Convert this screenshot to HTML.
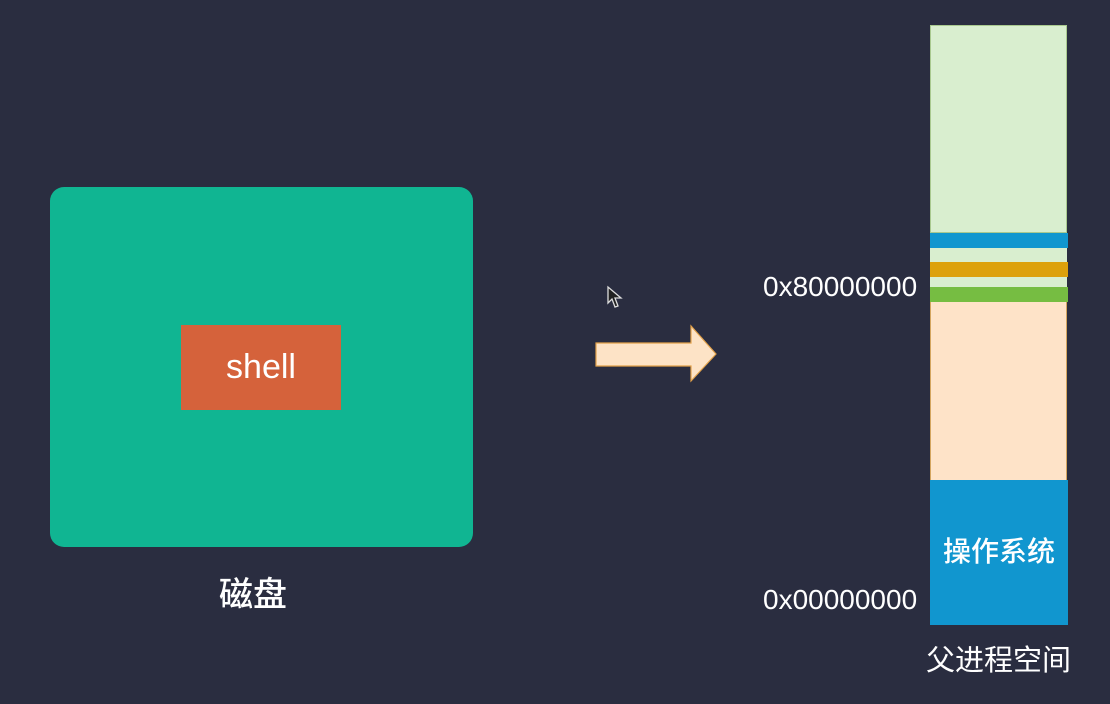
<!DOCTYPE html>
<html><head><meta charset="utf-8"><style>
body{margin:0;width:1110px;height:704px;background:#2a2d40;position:relative;overflow:hidden;font-family:"Liberation Sans","Noto Sans CJK SC",sans-serif;color:#fff}
div{position:absolute;box-sizing:border-box}
.t{white-space:nowrap}
</style></head><body>
<div style="left:50px;top:187px;width:423px;height:360px;background:#10b592;border-radius:14px"></div>
<div style="left:181px;top:325px;width:160px;height:85px;background:#d5623b"></div>
<div class="t" style="left:181px;top:347px;width:160px;text-align:center;font-size:34px;line-height:40px">shell</div>
<div class="t" style="left:219px;top:575px;font-size:34px;line-height:40px;font-weight:500">磁盘</div>
<svg style="position:absolute;left:0;top:0" width="1110" height="704">
<polygon points="596,343 691,343 691,326 716,354 691,381 691,366 596,366" fill="#fde3c6" stroke="#e3a24a" stroke-width="1.2"/>
<path d="M608,287 L608,303 L612,299 L615,307 L618,306 L615,298 L621,298 Z" fill="#222" stroke="#ddd" stroke-width="1.3"/>
</svg>
<div style="left:930px;top:25px;width:137px;height:208px;background:#d9eecf;border:1px solid #a9c98f"></div>
<div style="left:930px;top:233px;width:138px;height:15px;background:#1196cf"></div>
<div style="left:930px;top:248px;width:137px;height:14px;background:#d9eecf"></div>
<div style="left:930px;top:262px;width:138px;height:15px;background:#dda10c"></div>
<div style="left:930px;top:277px;width:137px;height:10px;background:#d9eecf"></div>
<div style="left:930px;top:287px;width:138px;height:15px;background:#76bd42"></div>
<div style="left:930px;top:302px;width:137px;height:178px;background:#fee3c8;border-left:1px solid #d4a55f;border-right:1px solid #d4a55f"></div>
<div style="left:930px;top:480px;width:138px;height:145px;background:#1196cf"></div>
<div class="t" style="left:930px;top:535px;width:138px;text-align:center;font-size:28px;line-height:34px;font-weight:500">操作系统</div>
<div class="t" style="left:763px;top:271px;font-size:28px;line-height:32px">0x80000000</div>
<div class="t" style="left:763px;top:584px;font-size:28px;line-height:32px">0x00000000</div>
<div class="t" style="left:926px;top:644px;font-size:29px;line-height:34px">父进程空间</div>
</body></html>
